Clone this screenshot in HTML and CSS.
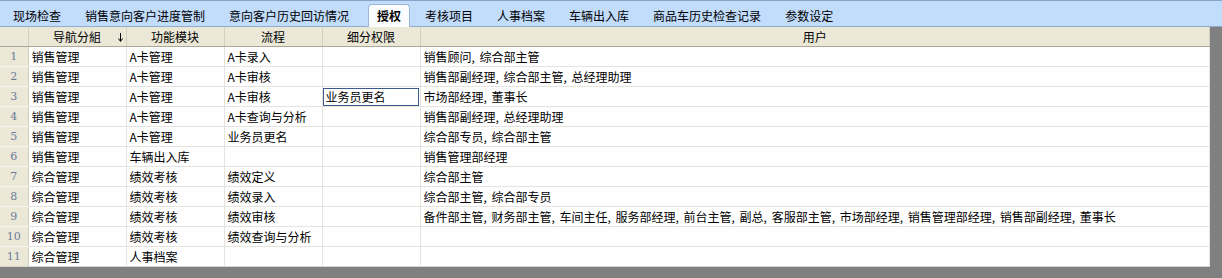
FILE: index.html
```html
<!DOCTYPE html>
<html lang="zh">
<head>
  <meta charset="UTF-8">
  <title>授权</title>
  <link rel="stylesheet" href="styles.css">
</head>
<body>
  <div class="tab-bar">
    <span class="tab">现场检查</span>
    <span class="tab">销售意向客户进度管制</span>
    <span class="tab">意向客户历史回访情况</span>
    <span class="tab active">授权</span>
    <span class="tab">考核项目</span>
    <span class="tab">人事档案</span>
    <span class="tab">车辆出入库</span>
    <span class="tab">商品车历史检查记录</span>
    <span class="tab">参数设定</span>
  </div>
  <div class="grid-wrap">
    <table class="grid">
      <colgroup>
        <col class="c-num"><col class="c-mid"><col class="c-mid"><col class="c-mid"><col class="c-mid"><col>
      </colgroup>
      <thead>
        <tr>
          <th class="num"></th>
          <th class="sorted">导航分組<svg class="arrow" width="5" height="9" viewBox="0 0 5 9"><path d="M2.5 0V8M0.5 5.5L2.5 8.5L4.5 5.5" fill="none" stroke="#000" stroke-width="1"/></svg></th>
          <th>功能模块</th>
          <th>流程</th>
          <th>细分权限</th>
          <th>用户</th>
        </tr>
      </thead>
      <tbody>
        <tr><td class="num">1</td><td>销售管理</td><td>A卡管理</td><td>A卡录入</td><td></td><td class="users">销售顾问, 综合部主管</td></tr>
        <tr><td class="num">2</td><td>销售管理</td><td>A卡管理</td><td>A卡审核</td><td></td><td class="users">销售部副经理, 综合部主管, 总经理助理</td></tr>
        <tr><td class="num">3</td><td>销售管理</td><td>A卡管理</td><td>A卡审核</td><td class="focus">业务员更名</td><td class="users">市场部经理, 董事长</td></tr>
        <tr><td class="num">4</td><td>销售管理</td><td>A卡管理</td><td>A卡查询与分析</td><td></td><td class="users">销售部副经理, 总经理助理</td></tr>
        <tr><td class="num">5</td><td>销售管理</td><td>A卡管理</td><td>业务员更名</td><td></td><td class="users">综合部专员, 综合部主管</td></tr>
        <tr><td class="num">6</td><td>销售管理</td><td>车辆出入库</td><td></td><td></td><td class="users">销售管理部经理</td></tr>
        <tr><td class="num">7</td><td>综合管理</td><td>绩效考核</td><td>绩效定义</td><td></td><td class="users">综合部主管</td></tr>
        <tr><td class="num">8</td><td>综合管理</td><td>绩效考核</td><td>绩效录入</td><td></td><td class="users">综合部主管, 综合部专员</td></tr>
        <tr><td class="num">9</td><td>综合管理</td><td>绩效考核</td><td>绩效审核</td><td></td><td class="users">备件部主管, 财务部主管, 车间主任, 服务部经理, 前台主管, 副总, 客服部主管, 市场部经理, 销售管理部经理, 销售部副经理, 董事长</td></tr>
        <tr><td class="num">10</td><td>综合管理</td><td>绩效考核</td><td>绩效查询与分析</td><td></td><td class="users"></td></tr>
        <tr><td class="num">11</td><td>综合管理</td><td>人事档案</td><td></td><td></td><td class="users"></td></tr>
      </tbody>
    </table>
  </div>
</body>
</html>
```

FILE: styles.css
```css
body {
  margin: 0;
  background: #808080;
  font-family: "Noto Sans CJK SC", "DejaVu Sans", sans-serif;
  font-size: 12px;
  color: #000;
}
.tab-bar {
  display: flex;
  align-items: flex-end;
  height: 27px;
  box-sizing: border-box;
  padding-left: 1px;
  background: #c2dcfc;
  border-top: 1px solid #8aa4c8;
  border-bottom: 1px solid #90acd0;
}
.tab {
  height: 22px;
  line-height: 22px;
  padding: 0 12px;
  margin-bottom: -1px;
  white-space: nowrap;
}
.tab.active {
  background: #fbfcfe;
  border: 1px solid #9cb6d6;
  border-bottom: none;
  border-radius: 4px 4px 0 0;
  font-weight: bold;
  padding: 0 8px;
  margin: 0 -9px -1px 7px;
}
.tab.active + .tab {
  padding-left: 24px;
}
.grid-wrap {
  width: 1210px;
  background: #fff;
}
.grid {
  width: 100%;
  table-layout: fixed;
  border-collapse: collapse;
}
.c-num {
  width: 28px;
}
.c-mid {
  width: 98px;
}
th, td {
  height: 19px;
  padding: 0 3px;
  line-height: 19px;
  white-space: nowrap;
  overflow: hidden;
  text-align: left;
  font-weight: normal;
  border-right: 1px solid #e4e3dd;
  border-bottom: 1px solid #e4e3dd;
}
th {
  background: #ebe8d7;
  text-align: center;
  border-right: 1px solid #d4d0c0;
  border-bottom: 1px solid #aca899;
}
.sorted {
  position: relative;
}
.arrow {
  position: absolute;
  right: 3px;
  top: 6px;
}
td.users {
  word-spacing: 2px;
}
td.num {
  background: #ebe8d7;
  color: #6b7b9b;
  text-align: center;
  font-size: 11px;
  font-family: "DejaVu Serif", serif;
  border-right: 1px solid #d4d0c0;
  border-bottom: 1px solid #f6f5ef;
}
td.focus {
  outline: 1px solid #3c5a8c;
  outline-offset: -2px;
}
tbody tr:last-child td {
  border-bottom: 1px solid #d8d6cc;
}
```
